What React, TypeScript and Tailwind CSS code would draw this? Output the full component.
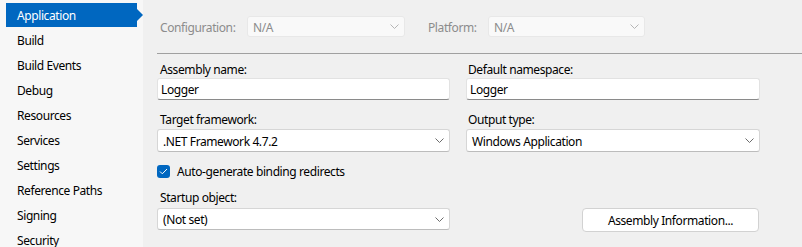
import React from "react";

const font = { fontFamily: '"Noto Sans", "Open Sans", sans-serif' };

function Chevron({ color }: { color: string }) {
  return (
    <svg width="9" height="5" viewBox="0 0 9 5" className="shrink-0">
      <path d="M0.5 0.5 L4.5 4.5 L8.5 0.5" fill="none" stroke={color} strokeWidth="1" />
    </svg>
  );
}

function Combo({ text, disabled, className }: { text: string; disabled?: boolean; className: string }) {
  return (
    <div
      className={
        "flex items-center justify-between rounded-[3px] border pl-[5px] pr-[5px] " +
        (disabled
          ? "bg-[#f9f9f9] border-[#e8e8e8] text-[#8c8c8c] "
          : "bg-white border-[#d6d6d6] border-b-[#bcbcbc] text-black ") +
        className
      }
    >
      <span className="pt-[2px] leading-none">{text}</span>
      <Chevron color={disabled ? "#b5b5b5" : "#6b6b6b"} />
    </div>
  );
}

function TextBox({ text }: { text: string }) {
  return (
    <div className="flex h-[22px] items-center rounded-[3px] border border-[#e2e2e2] border-b-[#8a8a8a] bg-white pl-[3px] text-black">
      <span className="pt-[2px] leading-none">{text}</span>
    </div>
  );
}

const items = [
  "Application",
  "Build",
  "Build Events",
  "Debug",
  "Resources",
  "Services",
  "Settings",
  "Reference Paths",
  "Signing",
  "Security",
];

export default function App() {
  return (
    <div
      className="flex h-[247px] w-[802px] overflow-hidden bg-[#f0f0f0] text-[12px] tracking-[-0.4px]"
      style={font}
    >
      <div className="flex w-[143px] shrink-0 flex-col gap-[1px] bg-[#f7f7f7] pt-[3px]">
        {items.map((it, i) =>
          i === 0 ? (
            <div
              key={it}
              className="relative ml-[6px] flex h-[24px] w-[131px] shrink-0 items-center bg-[#0067c0] pl-[11px] pt-[2px] text-white"
            >
              {it}
              <div className="absolute right-[-6px] top-[6px] h-0 w-0 border-y-[6px] border-l-[6px] border-y-transparent border-l-[#0067c0]" />
            </div>
          ) : (
            <div key={it} className="flex h-[24px] shrink-0 items-center pl-[17px] pt-[2px] text-black">
              {it}
            </div>
          )
        )}
      </div>
      <div className="flex flex-1 flex-col pl-[14px]">
        <div className="mt-[16px] flex h-[21px] items-center">
          <span className="ml-[3px] w-[87px] pt-[2px] text-[#8c8c8c]">Configuration:</span>
          <Combo text="N/A" disabled className="h-[21px] w-[158px]" />
          <span className="ml-[23px] w-[60px] pt-[2px] text-[#8c8c8c]">Platform:</span>
          <Combo text="N/A" disabled className="h-[21px] w-[157px]" />
        </div>
        <div className="mt-[16px] h-px bg-[#a0a0a0]" />
        <div className="mt-[8px] grid w-[603px] grid-cols-[293px_294px] gap-x-[16px]">
          <div className="flex flex-col">
            <span className="ml-[3px] h-[16px] leading-[16px] text-black">Assembly name:</span>
            <div>
              <TextBox text="Logger" />
            </div>
          </div>
          <div className="flex flex-col">
            <span className="ml-[2px] h-[16px] leading-[16px] text-black">Default namespace:</span>
            <div>
              <TextBox text="Logger" />
            </div>
          </div>
          <div className="mt-[12px] flex flex-col">
            <span className="ml-[3px] h-[16px] leading-[16px] text-black">Target framework:</span>
            <Combo text=".NET Framework 4.7.2" className="mt-[1px] h-[23px] w-full" />
          </div>
          <div className="mt-[12px] flex flex-col">
            <span className="ml-[2px] h-[16px] leading-[16px] text-black">Output type:</span>
            <Combo text="Windows Application" className="mt-[1px] h-[23px] w-full" />
          </div>
          <div className="mt-[12px] flex items-center">
            <div className="flex h-[13px] w-[13px] items-center justify-center rounded-[3px] bg-[#0067c0]">
              <svg width="9" height="7" viewBox="0 0 9 7">
                <path d="M1 3.5 L3.3 5.8 L8 1" fill="none" stroke="white" strokeWidth="1" />
              </svg>
            </div>
            <span className="ml-[7px] pt-[2px] leading-none text-black">Auto-generate binding redirects</span>
          </div>
          <div />
          <div className="mt-[12px] flex flex-col">
            <span className="ml-[3px] h-[16px] leading-[16px] text-black">Startup object:</span>
            <Combo text="(Not set)" className="mt-[2px] h-[22px] w-full" />
          </div>
          <div className="mt-[12px] flex flex-col items-end">
            <div className="h-[16px]" />
            <div className="mr-[1px] mt-[2px] flex h-[24px] w-[177px] items-center justify-center rounded-[4px] border border-[#d2d2d2] bg-white pt-[2px] text-black">
              Assembly Information...
            </div>
          </div>
        </div>
      </div>
    </div>
  );
}
